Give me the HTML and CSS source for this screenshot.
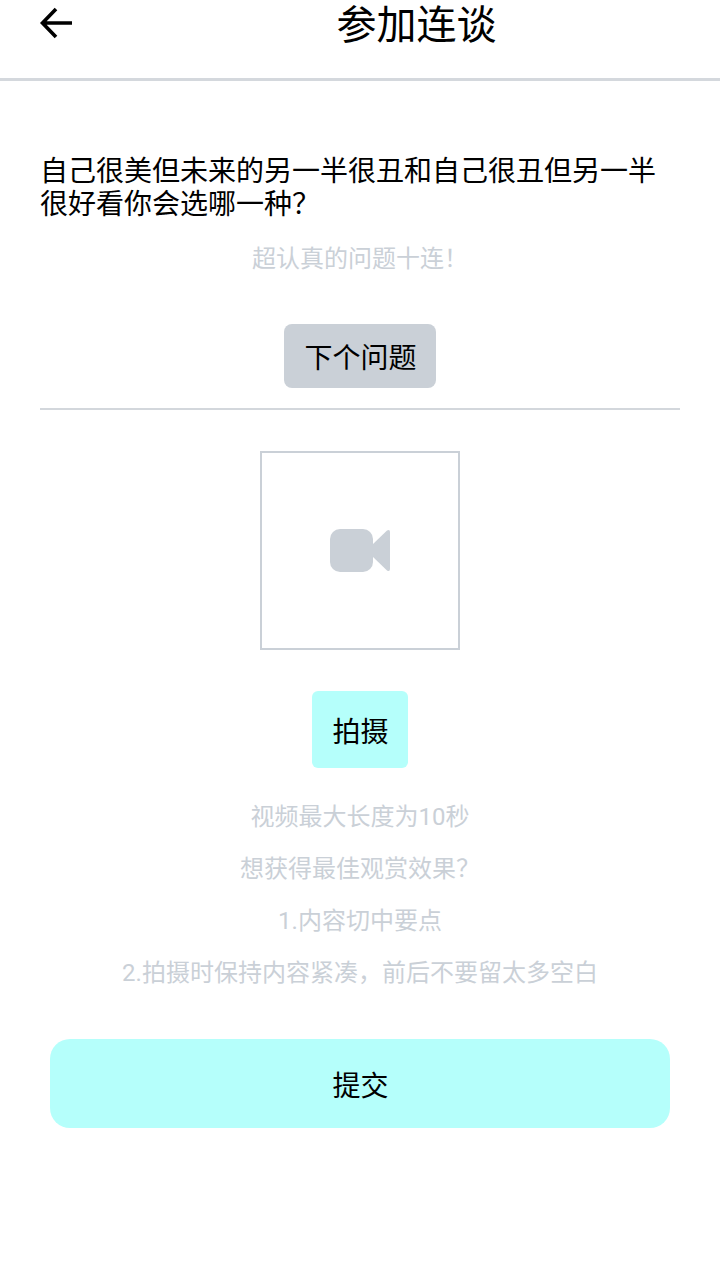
FILE: index.html
```html
<!DOCTYPE html>
<html lang="zh-CN">
<head>
  <meta charset="UTF-8">
  <title>参加连谈</title>
  <link rel="stylesheet" href="styles.css">
</head>
<body>
  <!-- HEADER -->
  <div class="header">
    <svg class="back" viewBox="0 0 34 32" width="34" height="32">
      <path d="M33 16H3M17 2L3.500 16L17 30" fill="none" stroke="#000" stroke-width="3.6"/>
    </svg>
    <h1>参加连谈</h1>
  </div>

  <!-- QUESTION -->
  <div class="question">
    <p class="question-text">自己很美但未来的另一半很丑和自己很丑但另一半很好看你会选哪一种？</p>
    <p class="hint topic">超认真的问题十连！</p>
    <button class="btn-next">下个问题</button>
  </div>

  <!-- VIDEO -->
  <div class="video">
    <div class="video-box">
      <svg viewBox="0 0 60 44" width="60" height="44">
        <rect x="0" y="0" width="43" height="43" rx="10" fill="#cad0d7"/>
        <path d="M43 15L57 1.500Q60 0 60 3V40Q60 43 57 41.500L43 28Z" fill="#cad0d7"/>
      </svg>
    </div>
    <button class="btn-shoot">拍摄</button>
    <div class="tips">
      <p class="hint">视频最大长度为10秒</p>
      <p class="hint">想获得最佳观赏效果？</p>
      <p class="hint">1.内容切中要点</p>
      <p class="hint">2.拍摄时保持内容紧凑，前后不要留太多空白</p>
    </div>
    <button class="btn-submit">提交</button>
  </div>
</body>
</html>
```

FILE: styles.css
```css
body {
  margin: 0;
  background: #fff;
  font-family: Roboto, "Noto Sans CJK SC", sans-serif;
  color: #000;
}
p {
  margin: 0;
}
button {
  border: none;
  color: #000;
  font-family: inherit;
  font-size: 28px;
  padding: 0 0 0 1px;
}
.header {
  height: 78px;
  border-bottom: 3px solid #d4d8dd;
  display: flex;
  justify-content: center;
  position: relative;
}
.header h1 {
  margin: 0;
  padding-left: 113px;
  font-size: 40px;
  font-weight: 400;
  line-height: 52px;
}
.back {
  position: absolute;
  left: 39px;
  top: 7px;
}
.question {
  margin: 0 40px;
  padding-top: 74px;
  padding-bottom: 20px;
  border-bottom: 2px solid #d3d7dc;
  display: flex;
  flex-direction: column;
  align-items: center;
}
.question-text {
  align-self: stretch;
  font-size: 28px;
  line-height: 33px;
}
.hint {
  color: #cad0d7;
  font-size: 24px;
  line-height: 52px;
  text-align: center;
}
.topic {
  margin-top: 12px;
}
.btn-next {
  margin-top: 39px;
  width: 152px;
  height: 64px;
  border-radius: 8px;
  background: #cad0d7;
}
.video {
  display: flex;
  flex-direction: column;
  align-items: center;
  padding-top: 41px;
}
.video-box {
  width: 196px;
  height: 195px;
  border: 2px solid #cad0d7;
  display: flex;
  align-items: center;
  justify-content: center;
}
.btn-shoot {
  margin-top: 41px;
  width: 96px;
  height: 77px;
  border-radius: 6px;
  background: #b5fffb;
}
.tips {
  margin-top: 23px;
}
.btn-submit {
  margin-top: 40px;
  width: 620px;
  height: 89px;
  border-radius: 20px;
  background: #b5fffb;
}
```
